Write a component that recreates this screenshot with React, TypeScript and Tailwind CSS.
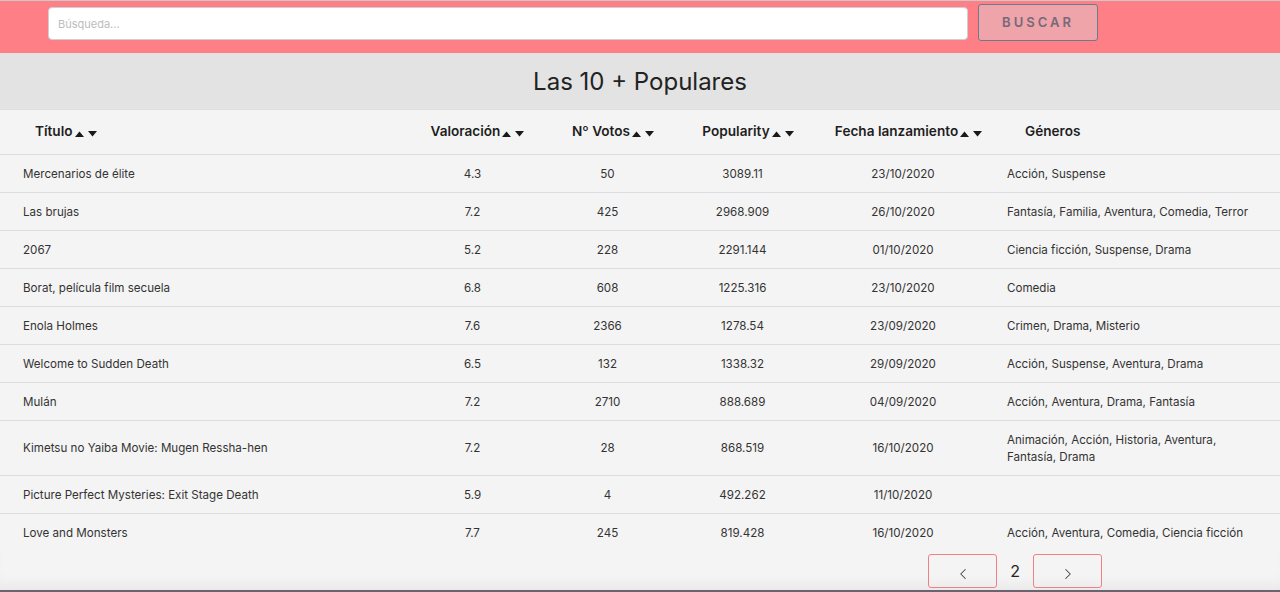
import { ChevronLeft, ChevronRight } from 'lucide-react';

interface Movie {
  title: string;
  rating: string;
  votes: string;
  popularity: string;
  date: string;
  genres: string;
}

const MOVIES: Movie[] = [
  { title: 'Mercenarios de élite', rating: '4.3', votes: '50', popularity: '3089.11', date: '23/10/2020', genres: 'Acción, Suspense' },
  { title: 'Las brujas', rating: '7.2', votes: '425', popularity: '2968.909', date: '26/10/2020', genres: 'Fantasía, Familia, Aventura, Comedia, Terror' },
  { title: '2067', rating: '5.2', votes: '228', popularity: '2291.144', date: '01/10/2020', genres: 'Ciencia ficción, Suspense, Drama' },
  { title: 'Borat, película film secuela', rating: '6.8', votes: '608', popularity: '1225.316', date: '23/10/2020', genres: 'Comedia' },
  { title: 'Enola Holmes', rating: '7.6', votes: '2366', popularity: '1278.54', date: '23/09/2020', genres: 'Crimen, Drama, Misterio' },
  { title: 'Welcome to Sudden Death', rating: '6.5', votes: '132', popularity: '1338.32', date: '29/09/2020', genres: 'Acción, Suspense, Aventura, Drama' },
  { title: 'Mulán', rating: '7.2', votes: '2710', popularity: '888.689', date: '04/09/2020', genres: 'Acción, Aventura, Drama, Fantasía' },
  { title: 'Kimetsu no Yaiba Movie: Mugen Ressha-hen', rating: '7.2', votes: '28', popularity: '868.519', date: '16/10/2020', genres: 'Animación, Acción, Historia, Aventura, Fantasía, Drama' },
  { title: 'Picture Perfect Mysteries: Exit Stage Death', rating: '5.9', votes: '4', popularity: '492.262', date: '11/10/2020', genres: '' },
  { title: 'Love and Monsters', rating: '7.7', votes: '245', popularity: '819.428', date: '16/10/2020', genres: 'Acción, Aventura, Comedia, Ciencia ficción' },
];

function SortArrows() {
  return (
    <span className="ml-[2px] inline-flex items-center gap-[4px] align-middle">
      <svg width="9" height="6" viewBox="0 0 9 6" className="mt-[3px]">
        <path d="M0 6 L4.5 0.5 L9 6 Z" fill="#1a1a1a" />
      </svg>
      <svg width="9" height="6" viewBox="0 0 9 6" className="mt-[3px]">
        <path d="M0 0 L9 0 L4.5 5.5 Z" fill="#1a1a1a" />
      </svg>
    </span>
  );
}

export default function App() {
  return (
    <div className="flex h-[592px] w-[1280px] flex-col overflow-hidden border-t border-[#c9c9c9] bg-[#f4f4f4] font-['Inter',sans-serif] text-[#333]">
      {/* search bar */}
      <div className="flex h-[52px] items-start gap-[10px] bg-[#ff7f86] pl-[48px] pt-[3px]">
        <input
          placeholder="Búsqueda..."
          className="mt-[3px] h-[33px] w-[920px] rounded-[4px] border border-[#cfcfcf] bg-white px-[9px] text-[11px] text-[#333] outline-none placeholder:text-[#bdbdbd]"
        />
        <button className="h-[37px] w-[120px] rounded-[3px] border border-[#6c7a8e] bg-[#eea4a8] text-[13px] font-semibold tracking-[3px] text-[#76697c]">
          BUSCAR
        </button>
      </div>

      {/* title band */}
      <div className="flex h-[57px] items-center justify-center border-b border-[#e0e0e0] bg-[#e3e3e3] pt-[1px]">
        <h1 className="text-[24px] font-normal text-[#222]">Las 10 + Populares</h1>
      </div>

      <table className="w-full table-fixed border-collapse text-[11.6px] leading-[17px]">
        <colgroup>
          <col className="w-[400px]" />
          <col className="w-[145px]" />
          <col className="w-[125px]" />
          <col className="w-[145px]" />
          <col className="w-[176px]" />
          <col />
        </colgroup>
        <thead>
          <tr className="h-[44px] border-b border-[#dcdce2] text-[13.6px] font-semibold text-[#1e1e1e]">
            <th className="pl-[35px] text-left font-semibold">
              Título<SortArrows />
            </th>
            <th className="pl-[10px] text-center font-semibold">
              Valoración<SortArrows />
            </th>
            <th className="pl-[11px] text-center font-semibold">
              Nº Votos<SortArrows />
            </th>
            <th className="pl-[11px] text-center font-semibold">
              Popularity<SortArrows />
            </th>
            <th className="pl-[11px] text-center font-semibold">
              Fecha lanzamiento<SortArrows />
            </th>
            <th className="pl-[34px] text-left font-semibold">Géneros</th>
          </tr>
        </thead>
        <tbody>
          {MOVIES.map((m, i) => (
            <tr
              key={m.title}
              className={i < MOVIES.length - 1 ? 'border-b border-[#dcdce2]' : ''}
            >
              <td className="pb-[9px] pl-[23px] pt-[11px] text-left">{m.title}</td>
              <td className="pb-[9px] pt-[11px] text-center">{m.rating}</td>
              <td className="pb-[9px] pt-[11px] text-center">{m.votes}</td>
              <td className="pb-[9px] pt-[11px] text-center">{m.popularity}</td>
              <td className="pb-[9px] pt-[11px] text-center">{m.date}</td>
              <td className="pb-[9px] pl-[16px] pr-[20px] pt-[11px] text-left">{m.genres}</td>
            </tr>
          ))}
        </tbody>
      </table>

      {/* pagination */}
      <div className="relative flex flex-1 items-start justify-end pr-[178px] pt-[3px] shadow-[inset_0_-14px_16px_-10px_rgba(0,0,0,0.07)]">
        <div className="flex items-center gap-[13px]">
          <button className="flex h-[34px] w-[69px] items-center justify-center rounded-[3px] border border-[#f07f86] pt-[7px] text-[#444]">
            <ChevronLeft size={18} strokeWidth={1.4} />
          </button>
          <span className="text-[16px] text-[#222]">2</span>
          <button className="flex h-[34px] w-[69px] items-center justify-center rounded-[3px] border border-[#f07f86] pt-[7px] text-[#444]">
            <ChevronRight size={18} strokeWidth={1.4} />
          </button>
        </div>
        <div className="absolute inset-x-0 bottom-0 h-[2px] bg-[#6b6470]" />
      </div>
    </div>
  );
}
